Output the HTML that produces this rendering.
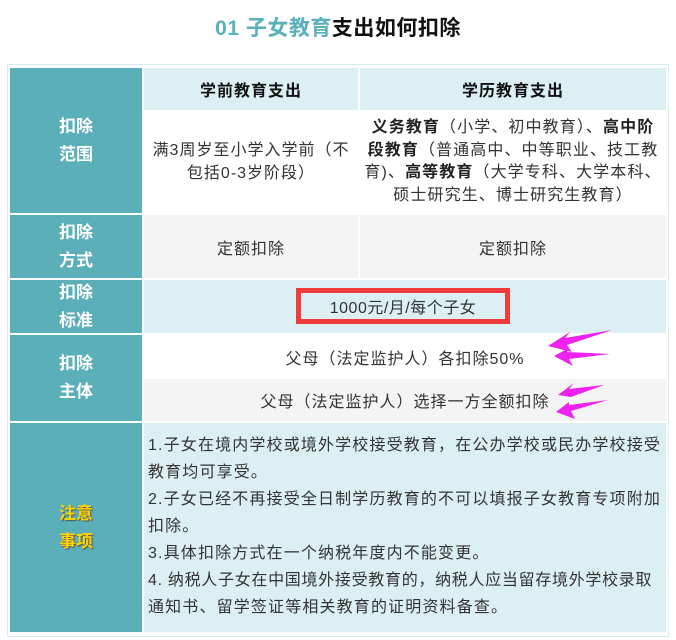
<!DOCTYPE html>
<html><head><meta charset="utf-8"><style>
body{margin:0;width:676px;height:640px;background:#fff;font-family:"Liberation Sans","Noto Sans CJK SC",sans-serif;position:relative;overflow:hidden;color:#333}
.a{position:absolute;box-sizing:border-box}
.t{position:absolute;left:0;top:12px;width:676px;text-align:center;font-size:21px;letter-spacing:0.5px;font-weight:bold;color:#111}
.t span{color:#5ab1ba}
.L{background:#5aafb8;color:#fff;font-weight:bold;font-size:17px;display:flex;align-items:center;justify-content:center;text-align:center;line-height:28px;left:10px;width:132px}
.c{display:flex;align-items:center;justify-content:center;text-align:center;font-size:16px;letter-spacing:1px}
.bl{background:#dcf0f3}.g{background:#f4f4f4}.w{background:#fff}
.nw{white-space:nowrap}
</style></head><body>
<div class="t"><span>01 子女教育</span>支出如何扣除</div>
<div class="a" style="left:7px;top:64px;width:662px;height:573px;border:1px solid #d6ecee;background:#fff"></div>
<div class="a L" style="top:68px;height:145px">扣除<br>范围</div>
<div class="a c bl" style="left:144px;top:68px;width:214px;height:42px;font-weight:bold;font-size:16px;color:#111">学前教育支出</div>
<div class="a c bl" style="left:360px;top:68px;width:306px;height:42px;font-weight:bold;font-size:16px;color:#111">学历教育支出</div>
<div class="a c w" style="left:144px;top:111px;width:214px;height:102px;line-height:23px;padding:0 4px">满3周岁至小学入学前（不包括0-3岁阶段）</div>
<div class="a c w nw" style="left:360px;top:111px;width:306px;height:102px;line-height:22.5px;padding:0;letter-spacing:1.1px">
<div><b style="color:#222">义务教育</b>（小学、初中教育）、<b style="color:#222">高中阶</b><br><b style="color:#222">段教育</b>（普通高中、中等职业、技工教<br>育)、<b style="color:#222">高等教育</b>（大学专科、大学本科、<br>硕士研究生、博士研究生教育）</div></div>
<div class="a L" style="top:215px;height:63px">扣除<br>方式</div>
<div class="a c g" style="left:144px;top:215px;width:214px;height:63px">定额扣除</div>
<div class="a c g" style="left:360px;top:215px;width:306px;height:63px">定额扣除</div>
<div class="a L" style="top:280px;height:53px">扣除<br>标准</div>
<div class="a c bl" style="left:144px;top:280px;width:522px;height:53px"></div>
<div class="a c" style="left:296px;top:288px;width:214px;height:36px;border:5px solid #f23b3b;font-size:16px;letter-spacing:0.5px">1000元/月/每个子女</div>
<div class="a L" style="top:335px;height:86px">扣除<br>主体</div>
<div class="a c w" style="left:144px;top:335px;width:522px;height:43px">父母（法定监护人）各扣除50%</div>
<div class="a c g" style="left:144px;top:379px;width:522px;height:42px">父母（法定监护人）选择一方全额扣除</div>
<svg class="a" style="left:548px;top:328px" width="70" height="92" viewBox="0 0 70 92">
<path d="M0 18 L22 4 L17 10 L64 2 L19 17 L24 24 Z" fill="#ee22ee"/>
<path d="M6 28 L21 20 L19 24 L62 26 L21 31 L25 38 Z" fill="#ee22ee"/>
<path d="M10 67 L26 55 L21 61 L56 57 L23 69 Z" fill="#ee22ee"/>
<path d="M8 84 L21 74 L21 77 L60 72 L23 83 L27 91 Z" fill="#ee22ee"/>
</svg>
<div class="a L" style="top:423px;height:209px;color:#ffd200;text-shadow:1px 1px 1px #555">注意<br>事项</div>
<div class="a bl nw" style="left:144px;top:423px;width:522px;height:209px;font-size:16px;letter-spacing:1.15px;line-height:27px;padding:9px 0 0 4px;color:#333;overflow:hidden">1.子女在境内学校或境外学校接受教育，在公办学校或民办学校接受<br>教育均可享受。<br>2.子女已经不再接受全日制学历教育的不可以填报子女教育专项附加<br>扣除。<br>3.具体扣除方式在一个纳税年度内不能变更。<br><span style="letter-spacing:0.7px">4. 纳税人子女在中国境外接受教育的，纳税人应当留存境外学校录取</span><br>通知书、留学签证等相关教育的证明资料备查。</div>
</body></html>
